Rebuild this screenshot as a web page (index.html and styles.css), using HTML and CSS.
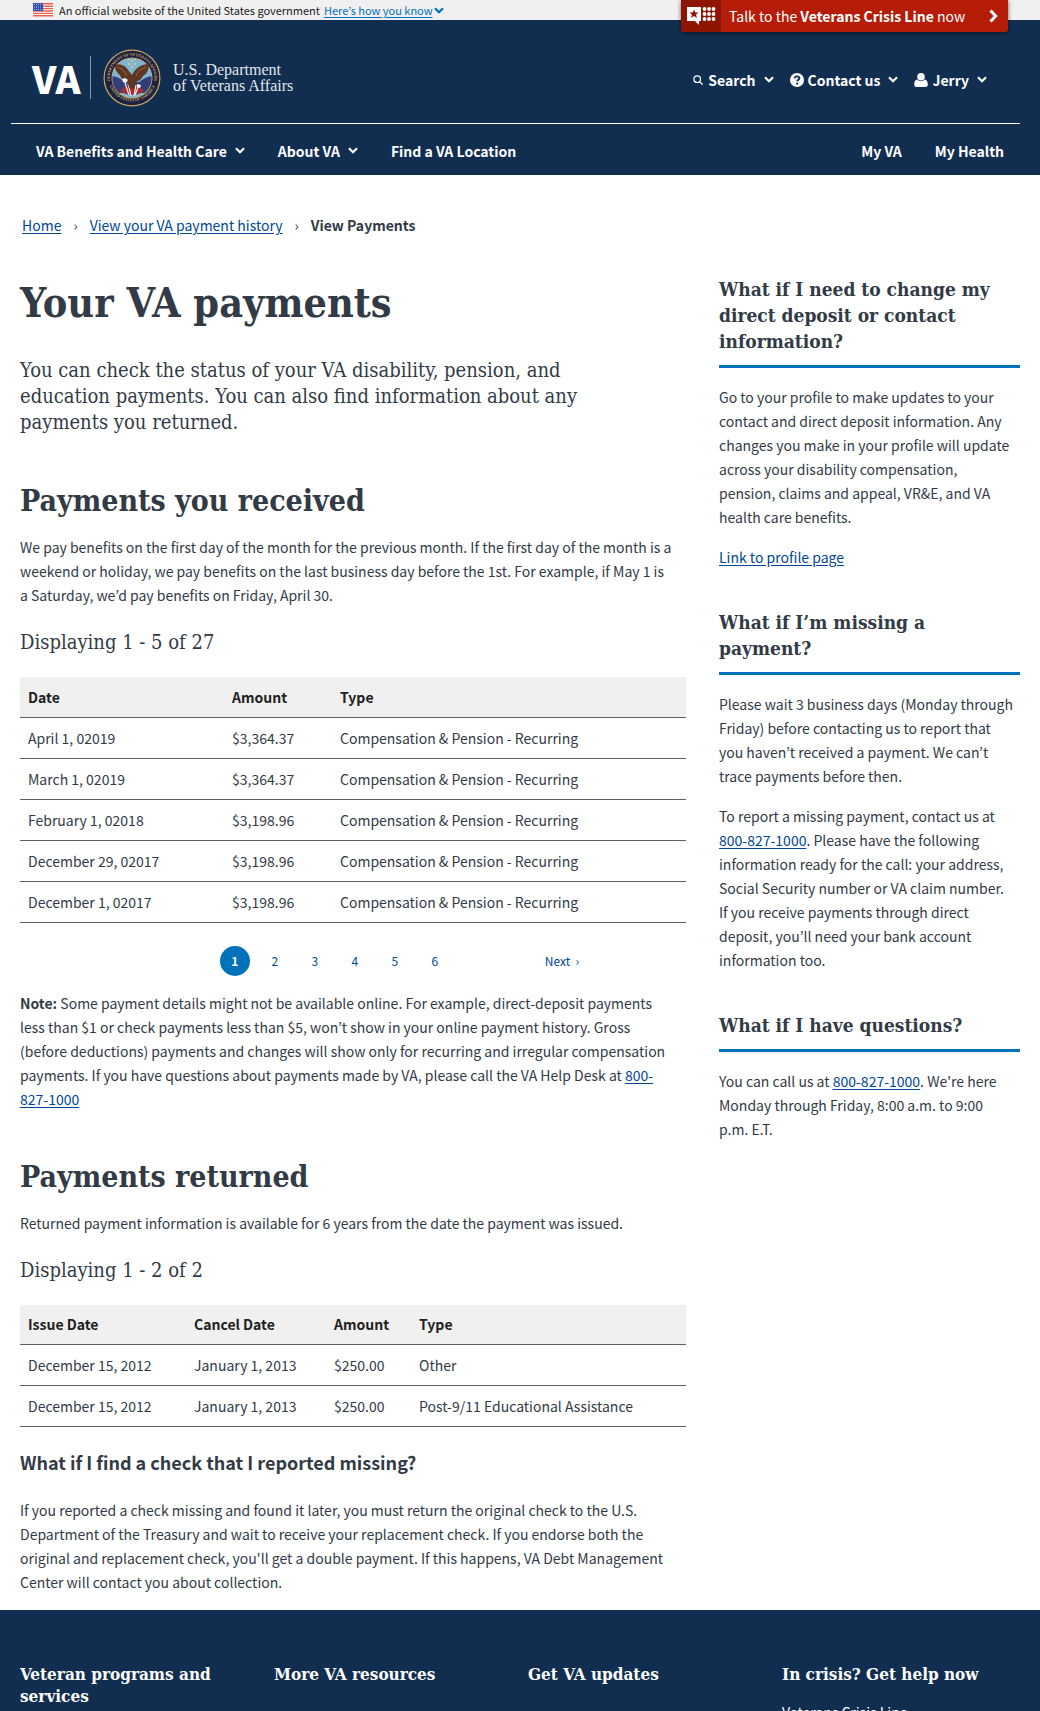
FILE: index.html
```html
<!DOCTYPE html>
<html lang="en">
<head>
<meta charset="utf-8">
<title>Your VA payments</title>
<meta name="viewport" content="width=device-width, initial-scale=1">
<link rel="stylesheet" href="styles.css">
</head>
<body>
<svg class="sprite" aria-hidden="true">
  <symbol id="chevron" viewBox="0 0 10 7"><path d="M1 1.2 5 5.2 9 1.2" fill="none" stroke="currentColor" stroke-width="2.2"/></symbol>
</svg>

<div class="gov-banner">
  <svg class="flag" viewBox="0 0 20 14" aria-hidden="true">
    <rect width="20" height="14" fill="#fff"/>
    <path d="M0 .8h20M0 3.2h20M0 5.6h20M0 8h20M0 10.4h20M0 12.8h20" stroke="#e8604c" stroke-width="1.4"/>
    <rect width="10" height="8" fill="#3550b0"/>
    <path d="M1 1.5h8M1 4h8M1 6.5h8" stroke="#a9b5e8" stroke-dasharray="1 1"/>
  </svg>
  <span>An official website of the United States government</span>
  <button type="button" class="gov-toggle"><span>Here’s how you know</span><svg class="chev" aria-hidden="true"><use href="#chevron"/></svg></button>
</div>

<header class="site-header">
  <a href="#" class="crisis">
    <span class="crisis-icon">
      <svg viewBox="0 0 29 18" aria-hidden="true">
        <path d="M0 0h14v14h-2v4l-4-4H0z" fill="#fff"/>
        <path d="m7 2.600 1.300 3h3.200L9 7.700l1 3.300-3-2-3 2 1-3.300-2.500-2.100h3.200z" fill="#8e1404"/>
        <g fill="#fff"><circle cx="17.500" cy="2" r="1.900"/><circle cx="22" cy="2" r="1.900"/><circle cx="26.500" cy="2" r="1.900"/><circle cx="17.500" cy="7" r="1.900"/><circle cx="22" cy="7" r="1.900"/><circle cx="26.500" cy="7" r="1.900"/><circle cx="17.500" cy="12" r="1.900"/><circle cx="22" cy="12" r="1.900"/><circle cx="26.500" cy="12" r="1.900"/></g>
      </svg>
    </span>
    <span class="crisis-text">Talk to the <strong>Veterans Crisis Line</strong> now</span>
    <svg class="crisis-arrow" viewBox="0 0 9 14" aria-hidden="true"><path d="m1.500 1.500 5.200 5.500-5.200 5.500" fill="none" stroke="#fff" stroke-width="3"/></svg>
  </a>

  <div class="masthead">
    <a href="#" class="logo">
      <span class="logo-va">VA</span>
      <svg class="seal" viewBox="0 0 58 58" aria-hidden="true">
        <circle cx="29" cy="29" r="28.500" fill="#c9a75c"/>
        <circle cx="29" cy="29" r="27.300" fill="#1d2144"/>
        <path id="arc-top" d="M7 32a22.200 22.200 0 1 1 44 0" fill="none"/>
        <path id="arc-low" d="M5.500 35a24.600 24.600 0 0 0 47 0" fill="none"/>
        <text class="seal-text"><textPath href="#arc-top" startOffset="50%">DEPARTMENT OF VETERANS AFFAIRS</textPath></text>
        <text class="seal-text"><textPath href="#arc-low" startOffset="50%">UNITED STATES OF AMERICA</textPath></text>
        <circle cx="29" cy="29" r="20.500" fill="#c9a75c"/>
        <circle cx="29" cy="29" r="19.700" fill="#7fb4d3"/>
        <path d="M9.500 27c5 1 9 3 12 6h15c3-3 7-5 12-6a19.700 19.700 0 0 1-7 17H16a19.700 19.700 0 0 1-6.500-17z" fill="#333d78"/>
        <path d="M17 42c3-4 7-6 12-6s9 2 12 6a19.700 19.700 0 0 1-24 0z" fill="#a32c36"/>
        <path d="m22 34 4 12M25 34l3 13M36 36l-4 10M33 36l-2 11" stroke="#f3e9e9" stroke-width="1.200"/>
        <path d="M12 16c5-2 10 0 13 5l4 5c3-6 8-11 17-11 0 5-2 10-6 12-1 3-4 5-7 6l-2 7h-4l-3-7c-4-1-6-4-7-7-3-2-5-5-5-10z" fill="#5f361f"/>
        <path d="M14 18c4 1 8 4 10 9M43 18c-4 1-8 4-10 9" fill="none" stroke="#8d5a35" stroke-width="1.200"/>
        <path d="m19 30 3-1 3 2-2 3-3-1zM34 35l4 1-1 3-3-1z" fill="#fff"/>
        <g fill="#e5d575"><circle cx="29" cy="12" r="1"/><circle cx="26" cy="15" r="1"/><circle cx="32" cy="15" r="1"/><circle cx="29" cy="18" r="1"/><circle cx="26" cy="10.500" r=".8"/><circle cx="32" cy="10.500" r=".8"/></g>
      </svg>
      <span class="logo-name">U.S. Department<br>of Veterans Affairs</span>
    </a>
    <div class="tools">
      <button type="button"><svg class="ico-search" viewBox="0 0 10 10" aria-hidden="true"><circle cx="4.200" cy="4.200" r="3.300" fill="none" stroke="#fff" stroke-width="1.200"/><path d="m6.600 6.600 3 3" stroke="#fff" stroke-width="1.300"/></svg><span>Search</span><svg class="chev" aria-hidden="true"><use href="#chevron"/></svg></button>
      <button type="button"><svg class="ico" viewBox="0 0 14 14" aria-hidden="true"><circle cx="7" cy="7" r="7" fill="#fff"/><path d="M4.600 5.300C4.800 3.900 5.800 3.300 7 3.300c1.400 0 2.400.7 2.400 1.900C9.400 6.700 7.300 6.800 7.200 8.400" fill="none" stroke="#112e51" stroke-width="1.800"/><circle cx="7.100" cy="10.600" r="1.100" fill="#112e51"/></svg><span>Contact us</span><svg class="chev" aria-hidden="true"><use href="#chevron"/></svg></button>
      <button type="button"><svg class="ico" viewBox="0 0 14 14" aria-hidden="true"><circle cx="7" cy="3.800" r="3.800" fill="#fff"/><path d="M3.300 6.600C1 7 .2 9 .2 11.500.2 13.200 1.200 14 2.800 14h8.400c1.600 0 2.600-.8 2.600-2.500 0-2.500-.8-4.500-3.100-4.900-1 1.100-2.200 1.700-3.700 1.700S4.300 7.700 3.300 6.600z" fill="#fff"/></svg><span>Jerry</span><svg class="chev" aria-hidden="true"><use href="#chevron"/></svg></button>
    </div>
  </div>

  <nav class="main-nav" aria-label="Main">
    <button type="button">VA Benefits and Health Care<svg class="chev" aria-hidden="true"><use href="#chevron"/></svg></button>
    <button type="button">About VA<svg class="chev" aria-hidden="true"><use href="#chevron"/></svg></button>
    <a href="#">Find a VA Location</a>
    <a href="#" class="push">My VA</a>
    <a href="#">My Health</a>
  </nav>
</header>

<nav class="breadcrumb" aria-label="Breadcrumb">
  <a href="#">Home</a><span>›</span><a href="#">View your VA payment history</a><span>›</span><strong>View Payments</strong>
</nav>

<div class="layout">
  <main>
    <h1>Your VA payments</h1>
    <p class="intro">You can check the status of your VA disability, pension, and education payments. You can also find information about any payments you returned.</p>

    <h2>Payments you received</h2>
    <p>We pay benefits on the first day of the month for the previous month. If the first day of the month is a weekend or holiday, we pay benefits on the last business day before the 1st. For example, if May 1 is a Saturday, we’d pay benefits on Friday, April 30.</p>
    <h3 class="count">Displaying 1 - 5 of 27</h3>
    <table class="received">
      <thead><tr><th scope="col">Date</th><th scope="col">Amount</th><th scope="col">Type</th></tr></thead>
      <tbody>
        <tr><td>April 1, 02019</td><td>$3,364.37</td><td>Compensation &amp; Pension - Recurring</td></tr>
        <tr><td>March 1, 02019</td><td>$3,364.37</td><td>Compensation &amp; Pension - Recurring</td></tr>
        <tr><td>February 1, 02018</td><td>$3,198.96</td><td>Compensation &amp; Pension - Recurring</td></tr>
        <tr><td>December 29, 02017</td><td>$3,198.96</td><td>Compensation &amp; Pension - Recurring</td></tr>
        <tr><td>December 1, 02017</td><td>$3,198.96</td><td>Compensation &amp; Pension - Recurring</td></tr>
      </tbody>
    </table>
    <nav class="pager" aria-label="Pagination">
      <button type="button" class="current" aria-current="page">1</button>
      <button type="button">2</button>
      <button type="button">3</button>
      <button type="button">4</button>
      <button type="button">5</button>
      <button type="button">6</button>
      <button type="button" class="next">Next&nbsp; ›</button>
    </nav>
    <p><strong>Note:</strong> Some payment details might not be available online. For example, direct-deposit payments less than $1 or check payments less than $5, won’t show in your online payment history. Gross (before deductions) payments and changes will show only for recurring and irregular compensation payments. If you have questions about payments made by VA, please call the VA Help Desk at <a href="tel:8008271000">800-827-1000</a></p>

    <h2>Payments returned</h2>
    <p>Returned payment information is available for 6 years from the date the payment was issued.</p>
    <h3 class="count">Displaying 1 - 2 of 2</h3>
    <table class="returned">
      <thead><tr><th scope="col">Issue Date</th><th scope="col">Cancel Date</th><th scope="col">Amount</th><th scope="col">Type</th></tr></thead>
      <tbody>
        <tr><td>December 15, 2012</td><td>January 1, 2013</td><td>$250.00</td><td>Other</td></tr>
        <tr><td>December 15, 2012</td><td>January 1, 2013</td><td>$250.00</td><td>Post-9/11 Educational Assistance</td></tr>
      </tbody>
    </table>
    <h3 class="question">What if I find a check that I reported missing?</h3>
    <p>If you reported a check missing and found it later, you must return the original check to the U.S. Department of the Treasury and wait to receive your replacement check. If you endorse both the original and replacement check, you'll get a double payment. If this happens, VA Debt Management Center will contact you about collection.</p>
  </main>

  <aside>
    <h2>What if I need to change my direct deposit or contact information?</h2>
    <p>Go to your profile to make updates to your contact and direct deposit information. Any changes you make in your profile will update across your disability compensation, pension, claims and appeal, VR&amp;E, and VA health care benefits.</p>
    <p><a href="#">Link to profile page</a></p>
    <h2>What if I’m missing a payment?</h2>
    <p>Please wait 3 business days (Monday through Friday) before contacting us to report that you haven’t received a payment. We can’t trace payments before then.</p>
    <p>To report a missing payment, contact us at <a href="tel:8008271000">800-827-1000</a>. Please have the following information ready for the call: your address, Social Security number or VA claim number. If you receive payments through direct deposit, you’ll need your bank account information too.</p>
    <h2>What if I have questions?</h2>
    <p>You can call us at <a href="tel:8008271000">800-827-1000</a>. We're here Monday through Friday, 8:00 a.m. to 9:00 p.m. E.T.</p>
  </aside>
</div>

<footer class="site-footer">
  <section><h2>Veteran programs and services</h2></section>
  <section><h2>More VA resources</h2></section>
  <section><h2>Get VA updates</h2></section>
  <section><h2>In crisis? Get help now</h2><a href="#">Veterans Crisis Line</a></section>
</footer>
</body>
</html>
```

FILE: styles.css
```css
:root {
  --navy: #112e51;
  --ink: #323a45;
  --link: #004795;
  --blue: #0071bb;
  --sans: "Noto Sans CJK KR", "Noto Sans", sans-serif;
  --slab: "DejaVu Serif Condensed", "DejaVu Serif", serif;
}

* { box-sizing: border-box; }

body {
  margin: 0;
  background: #fff;
  color: var(--ink);
  font-family: var(--sans);
  font-size: 14px;
  line-height: 24px;
}

h1, h2, h3, p { margin: 0; }
a { color: var(--link); text-underline-offset: 2px; }
button {
  padding: 0;
  border: 0;
  background: none;
  color: inherit;
  font: inherit;
  cursor: pointer;
}

.sprite { display: none; }
.chev { width: 10px; height: 7px; flex: none; }

/* Government banner */
.gov-banner {
  display: flex;
  align-items: center;
  height: 20px;
  padding-left: 33px;
  background: #f0f0f0;
  color: #212121;
  font-size: 11px;
  line-height: 20px;
}
.flag { width: 20px; height: 14px; margin-right: 6px; }
.gov-toggle { display: flex; align-items: center; margin-left: 4px; color: var(--blue); }
.gov-toggle span { text-decoration: underline; text-underline-offset: 2px; }
.gov-toggle .chev { margin-left: 1px; }

/* Header */
.site-header { position: relative; background: var(--navy); color: #fff; }
.site-header a { color: #fff; text-decoration: none; }

.crisis {
  position: absolute;
  top: -20px;
  right: 32px;
  display: flex;
  align-items: center;
  width: 327px;
  height: 32px;
  overflow: hidden;
  border-radius: 0 0 3px 3px;
  background: #b51d09;
  box-shadow: 0 1px 4px rgba(0, 0, 0, .6);
  font-size: 14px;
}
.crisis-icon { display: flex; align-items: center; width: 40px; height: 32px; padding-left: 6px; background: #8e1404; }
.crisis-icon svg { width: 29px; height: 18px; }
.crisis-text { flex: 1; padding-left: 8px; white-space: nowrap; }
.crisis-arrow { width: 9px; height: 14px; margin-right: 10px; }

.masthead {
  display: flex;
  align-items: center;
  justify-content: space-between;
  height: 104px;
  margin: 0 20px 0 11px;
  padding: 12px 33px 0 21px;
  border-bottom: 1px solid #fff;
}
.logo { display: flex; align-items: center; }
.logo-va {
  width: 59px;
  border-right: 1px solid #8897a8;
  font-size: 38px;
  font-weight: 900;
  line-height: 43px;
}
.seal { width: 58px; height: 58px; margin: 0 12px; }
.seal-text { fill: #c9a75c; font-family: "Liberation Serif", serif; font-size: 4px; font-weight: 700; text-anchor: middle; }
.logo-name { color: #e3e7ec; font-family: "Liberation Serif", serif; font-size: 16px; line-height: 16px; white-space: nowrap; }

.tools { display: flex; gap: 16px; padding-top: 4px; font-weight: 700; }
.tools button { display: flex; align-items: center; }
.tools .chev { margin-left: 8px; }
.ico { width: 14px; height: 14px; margin-right: 4px; }
.ico-search { width: 10px; height: 10px; margin-right: 5px; }

.main-nav {
  display: flex;
  align-items: center;
  gap: 33px;
  height: 51px;
  padding: 2px 36px 0;
  font-weight: 700;
}
.main-nav button { display: flex; align-items: center; }
.main-nav .chev { margin-left: 8px; }
.main-nav .push { margin-left: auto; }

/* Page body */
.breadcrumb { display: flex; gap: 12px; padding: 38px 22px 0; }

.layout {
  display: grid;
  grid-template-columns: minmax(0, 666fr) minmax(0, 301fr);
  gap: 33px;
  padding: 39px 20px 16px;
}

main p { padding-right: 13px; }
main h1 { margin-top: 5px; font-family: var(--slab); font-size: 41px; line-height: 44px; }
main .intro { margin-top: 32px; padding-right: 50px; font-family: var(--slab); font-size: 20px; line-height: 26px; }
main h2 { margin: 48px 0 16px; font-family: var(--slab); font-size: 30px; line-height: 36px; }
.count { margin: 22px 0; font-family: var(--slab); font-size: 20px; font-weight: 400; line-height: 26px; }
.question { margin: 23px 0 24px; font-size: 18px; line-height: 24px; }

table { width: 100%; border-collapse: collapse; table-layout: fixed; }
th, td { height: 41px; padding: 0 8px; border-bottom: 1px solid #5b616b; text-align: left; }
th { height: 40px; background: #f0f0f0; color: #212121; }
.received th:nth-child(1) { width: 204px; }
.received th:nth-child(2) { width: 108px; }
.returned th:nth-child(1) { width: 166px; }
.returned th:nth-child(2) { width: 140px; }
.returned th:nth-child(3) { width: 85px; }

.pager { display: flex; gap: 10px; margin: 23px 0 15px 30%; color: var(--link); font-size: 12px; }
.pager button { width: 30px; height: 30px; }
.pager .current { border-radius: 50%; background: var(--blue); color: #fff; font-weight: 700; }
.pager .next { width: auto; margin-left: 85px; }

aside p { padding-right: 6px; }
aside h2 {
  margin: 40px 0 17px;
  padding-bottom: 11px;
  border-bottom: 3px solid var(--blue);
  font-family: var(--slab);
  font-size: 19px;
  line-height: 26px;
}
aside h2:first-child { margin-top: 0; }
aside p + p { margin-top: 16px; }

/* Footer */
.site-footer {
  display: grid;
  grid-template-columns: repeat(4, minmax(0, 1fr));
  gap: 16px;
  padding: 53px 20px 40px;
  background: var(--navy);
  color: #fff;
}
.site-footer h2 { margin-bottom: 15px; font-family: var(--slab); font-size: 17px; line-height: 22px; }
.site-footer a { color: #fff; text-decoration: none; }
```
